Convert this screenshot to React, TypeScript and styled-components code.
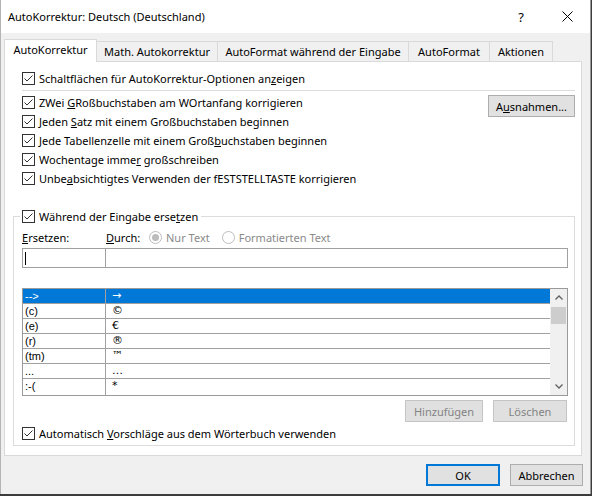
import React from "react";
import styled, { createGlobalStyle } from "styled-components";

const GlobalStyle = createGlobalStyle`
    html, body {
        margin: 0;
        padding: 0;
        background: #3c3c3c;
    }
    * {
        box-sizing: border-box;
    }
`;

const UI_FONT = `"Noto Sans", "Liberation Sans", Arial, sans-serif`;

const Window = styled.div`
    width: 591px;
    height: 494px;
    display: flex;
    flex-direction: column;
    background: #f0f0f0;
    border-left: 1px solid #b4b4b4;
    border-right: 1px solid #9a9a9a;
    font-family: ${UI_FONT};
    font-size: 11px;
    color: #000;
`;

const TitleBar = styled.div`
    height: 33px;
    flex: none;
    display: flex;
    align-items: center;
    background: #fff;
    padding-left: 7px;
`;

const TitleText = styled.div`
    flex: 1;
    font-size: 11px;
`;

const TitleButton = styled.div`
    width: 46px;
    height: 33px;
    display: flex;
    align-items: center;
    justify-content: center;
    font-size: 13px;
`;

const Body = styled.div`
    flex: 1;
    display: flex;
    flex-direction: column;
    padding: 0 8px 0 3px;
`;

const TabRow = styled.div`
    display: flex;
    align-items: flex-end;
    height: 23px;
    margin-top: 6px;
`;

const Tab = styled.div<{ $w: number; $active?: boolean }>`
    width: ${(p) => p.$w}px;
    height: ${(p) => (p.$active ? 23 : 21)}px;
    display: flex;
    align-items: center;
    justify-content: center;
    padding-bottom: ${(p) => (p.$active ? 3 : 1)}px;
    background: ${(p) => (p.$active ? "#fff" : "#f0f0f0")};
    border: 1px solid #d9d9d9;
    border-bottom: ${(p) => (p.$active ? "none" : "1px solid #d9d9d9")};
    border-left: ${(p) => (p.$active ? "1px solid #d9d9d9" : "none")};
    position: relative;
    z-index: ${(p) => (p.$active ? 1 : 0)};
    white-space: nowrap;
`;

const Panel = styled.div`
    margin-top: -1px;
    width: 578px;
    height: 395px;
    background: #fff;
    border: 1px solid #d9d9d9;
    padding: 7px 6px 0 8px;
    display: flex;
    flex-direction: column;
`;

const CheckRow = styled.label<{ $indent?: number }>`
    height: 19px;
    display: flex;
    align-items: center;
    gap: 4px;
    padding-left: ${(p) => p.$indent ?? 9}px;
    white-space: nowrap;
`;

const Separator = styled.div`
    height: 1px;
    margin: 2px 0 2px 9px;
    background: #dcdcdc;
`;

const OptionBlock = styled.div`
    display: flex;
    justify-content: space-between;
    align-items: flex-start;
`;

const OptionList = styled.div`
    display: flex;
    flex-direction: column;
`;

const Button = styled.button<{ $w: number; $default?: boolean }>`
    width: ${(p) => p.$w}px;
    height: 22px;
    padding: 0;
    margin: 0;
    font-family: ${UI_FONT};
    font-size: 11px;
    color: #000;
    background: #e1e1e1;
    border: ${(p) => (p.$default ? "2px solid #0078d7" : "1px solid #adadad")};
    &:disabled {
        color: #838383;
        background: #e0e0e0;
        border-color: #c4c4c4;
    }
`;

const Accel = styled.span`
    text-decoration: underline;
    text-underline-offset: 1px;
`;

const Group = styled.fieldset`
    margin: 19px 0 0 0;
    padding: 0 6px 2px 8px;
    min-inline-size: 0;
    border: 1px solid #dcdcdc;
    display: flex;
    flex-direction: column;
`;

const Legend = styled.legend`
    padding: 0 3px 0 2px;
    margin-left: -2px;
    height: 19px;
    display: flex;
    align-items: center;
    gap: 4px;
`;

const LabelRow = styled.div`
    height: 19px;
    margin-top: 2px;
    display: flex;
    align-items: center;
`;

const FieldLabel = styled.div<{ $w: number }>`
    width: ${(p) => p.$w}px;
    flex: none;
`;

const RadioItem = styled.div`
    display: flex;
    align-items: center;
    gap: 4px;
    color: #8a8a8a;
    margin-right: 12px;
`;

const InputRow = styled.div`
    display: flex;
    height: 20px;
    margin-top: 1px;
`;

const TextBox = styled.div<{ $w?: number }>`
    ${(p) => (p.$w ? `width: ${p.$w}px; flex: none;` : "flex: 1;")}
    height: 20px;
    border: 1px solid #a0a0a0;
    background: #fff;
    position: relative;
    & + & {
        margin-left: -1px;
    }
`;

const Caret = styled.div`
    position: absolute;
    left: 2px;
    top: 3px;
    width: 1px;
    height: 13px;
    background: #000;
`;

const ListBox = styled.div`
    margin-top: 20px;
    height: 108px;
    border: 1px solid #9a9a9a;
    display: flex;
    background: #fff;
    font-family: "Liberation Sans", Arial, sans-serif;
    font-size: 11px;
`;

const ListRows = styled.div`
    flex: 1;
    display: flex;
    flex-direction: column;
`;

const ListRow = styled.div<{ $selected?: boolean }>`
    height: 15px;
    flex: none;
    display: flex;
    border-bottom: 1px solid #a0a0a0;
    background: ${(p) => (p.$selected ? "#0078d7" : "#fff")};
    color: ${(p) => (p.$selected ? "#fff" : "#000")};
    &:last-child {
        border-bottom: none;
        height: 16px;
    }
`;

const KeyCell = styled.div`
    width: 83px;
    flex: none;
    border-right: 1px solid #a0a0a0;
    padding-left: 2px;
    line-height: 14px;
    white-space: nowrap;
`;

const ValueCell = styled.div`
    flex: 1;
    padding-left: 6px;
    line-height: 14px;
    font-family: "DejaVu Sans", "Liberation Sans", sans-serif;
    font-size: 11px;
`;

const ScrollBar = styled.div`
    width: 17px;
    flex: none;
    background: #f0f0f0;
    display: flex;
    flex-direction: column;
`;

const ScrollArrow = styled.div`
    height: 17px;
    display: flex;
    align-items: center;
    justify-content: center;
`;

const ScrollTrack = styled.div`
    flex: 1;
    padding: 1px 1px 0 1px;
`;

const ScrollThumb = styled.div`
    height: 17px;
    background: #cdcdcd;
`;

const ButtonRow = styled.div<{ $gap: number }>`
    display: flex;
    justify-content: flex-end;
    gap: ${(p) => p.$gap}px;
    margin-top: 4px;
    padding-right: 1px;
`;

const Footer = styled.div`
    display: flex;
    justify-content: flex-end;
    gap: 10px;
    margin-top: 8px;
    margin-right: -1px;
`;

const CheckBox = ({ checked = true }: { checked?: boolean }) => (
    <svg width="13" height="13" viewBox="0 0 13 13" style={{ flex: "none" }}>
        <rect x="0.5" y="0.5" width="12" height="12" fill="#fff" stroke="#333" />
        {checked && (
            <path d="M2.5 6.5 L5 9 L10.5 3.5" fill="none" stroke="#333" strokeWidth="1" />
        )}
    </svg>
);

const Radio = ({ checked = false }: { checked?: boolean }) => (
    <svg width="13" height="13" viewBox="0 0 13 13" style={{ flex: "none" }}>
        <circle cx="6.5" cy="6.5" r="6" fill="#fff" stroke="#bcbcbc" />
        {checked && <circle cx="6.5" cy="6.5" r="3.5" fill="#bcbcbc" />}
    </svg>
);

const Chevron = ({ up }: { up?: boolean }) => (
    <svg width="8" height="5" viewBox="0 0 8 5">
        <path
            d={up ? "M0.5 4.5 L4 1 L7.5 4.5" : "M0.5 0.5 L4 4 L7.5 0.5"}
            fill="none"
            stroke="#606060"
            strokeWidth="1.3"
        />
    </svg>
);

const entries = [
    ["-->", "\u2192"],
    ["(c)", "\u00a9"],
    ["(e)", "\u20ac"],
    ["(r)", "\u00ae"],
    ["(tm)", "\u2122"],
    ["...", "\u2026"],
    [":-(", "*"],
];

const App = () => {
    return (
        <>
            <GlobalStyle />
            <Window>
                <TitleBar>
                    <TitleText>AutoKorrektur: Deutsch (Deutschland)</TitleText>
                    <TitleButton>?</TitleButton>
                    <TitleButton>
                        <svg width="11" height="11" viewBox="0 0 11 11">
                            <path d="M0.5 0.5 L10.5 10.5 M10.5 0.5 L0.5 10.5" stroke="#000" strokeWidth="1" />
                        </svg>
                    </TitleButton>
                </TitleBar>
                <Body>
                    <TabRow>
                        <Tab $w={93} $active>AutoKorrektur</Tab>
                        <Tab $w={121}>Math. Autokorrektur</Tab>
                        <Tab $w={191}>AutoFormat während der Eingabe</Tab>
                        <Tab $w={81}>AutoFormat</Tab>
                        <Tab $w={63}>Aktionen</Tab>
                    </TabRow>
                    <Panel>
                        <CheckRow>
                            <CheckBox />
                            <span>
                                Schaltflächen für AutoKorrektur-Optionen an<Accel>z</Accel>eigen
                            </span>
                        </CheckRow>
                        <Separator />
                        <OptionBlock>
                            <OptionList>
                                <CheckRow>
                                    <CheckBox />
                                    <span>
                                        ZWei <Accel>G</Accel>Roßbuchstaben am WOrtanfang korrigieren
                                    </span>
                                </CheckRow>
                                <CheckRow>
                                    <CheckBox />
                                    <span>
                                        Jeden <Accel>S</Accel>atz mit einem Großbuchstaben beginnen
                                    </span>
                                </CheckRow>
                                <CheckRow>
                                    <CheckBox />
                                    <span>
                                        Jede Tabellenzelle mit einem Groß<Accel>b</Accel>uchstaben beginnen
                                    </span>
                                </CheckRow>
                                <CheckRow>
                                    <CheckBox />
                                    <span>
                                        Wochentage imme<Accel>r</Accel> großschreiben
                                    </span>
                                </CheckRow>
                                <CheckRow>
                                    <CheckBox />
                                    <span>
                                        Unbe<Accel>a</Accel>bsichtigtes Verwenden der fESTSTELLTASTE korrigieren
                                    </span>
                                </CheckRow>
                            </OptionList>
                            <Button $w={87} style={{ marginTop: 2 }}>
                                A<Accel>u</Accel>snahmen...
                            </Button>
                        </OptionBlock>
                        <Group>
                            <Legend>
                                <CheckBox />
                                <span>
                                    Während der Eingabe erse<Accel>t</Accel>zen
                                </span>
                            </Legend>
                            <LabelRow>
                                <FieldLabel $w={84}>
                                    <Accel>E</Accel>rsetzen:
                                </FieldLabel>
                                <FieldLabel $w={43}>
                                    <Accel>D</Accel>urch:
                                </FieldLabel>
                                <RadioItem>
                                    <Radio checked />
                                    <span>Nur Text</span>
                                </RadioItem>
                                <RadioItem>
                                    <Radio />
                                    <span>Formatierten Text</span>
                                </RadioItem>
                            </LabelRow>
                            <InputRow>
                                <TextBox $w={84}>
                                    <Caret />
                                </TextBox>
                                <TextBox />
                            </InputRow>
                            <ListBox>
                                <ListRows>
                                    {entries.map(([key, value], i) => (
                                        <ListRow key={key} $selected={i === 0}>
                                            <KeyCell>{key}</KeyCell>
                                            <ValueCell>{value}</ValueCell>
                                        </ListRow>
                                    ))}
                                </ListRows>
                                <ScrollBar>
                                    <ScrollArrow>
                                        <Chevron up />
                                    </ScrollArrow>
                                    <ScrollTrack>
                                        <ScrollThumb />
                                    </ScrollTrack>
                                    <ScrollArrow>
                                        <Chevron />
                                    </ScrollArrow>
                                </ScrollBar>
                            </ListBox>
                            <ButtonRow $gap={10}>
                                <Button $w={78} disabled>
                                    Hinzufügen
                                </Button>
                                <Button $w={74} disabled>
                                    Löschen
                                </Button>
                            </ButtonRow>
                            <CheckRow $indent={0} style={{ marginTop: 2 }}>
                                <CheckBox />
                                <span>
                                    Automatisch <Accel>V</Accel>orschläge aus dem Wörterbuch verwenden
                                </span>
                            </CheckRow>
                        </Group>
                    </Panel>
                    <Footer>
                        <Button $w={74} $default>
                            OK
                        </Button>
                        <Button $w={73}>Abbrechen</Button>
                    </Footer>
                </Body>
            </Window>
        </>
    );
};

export default App;
